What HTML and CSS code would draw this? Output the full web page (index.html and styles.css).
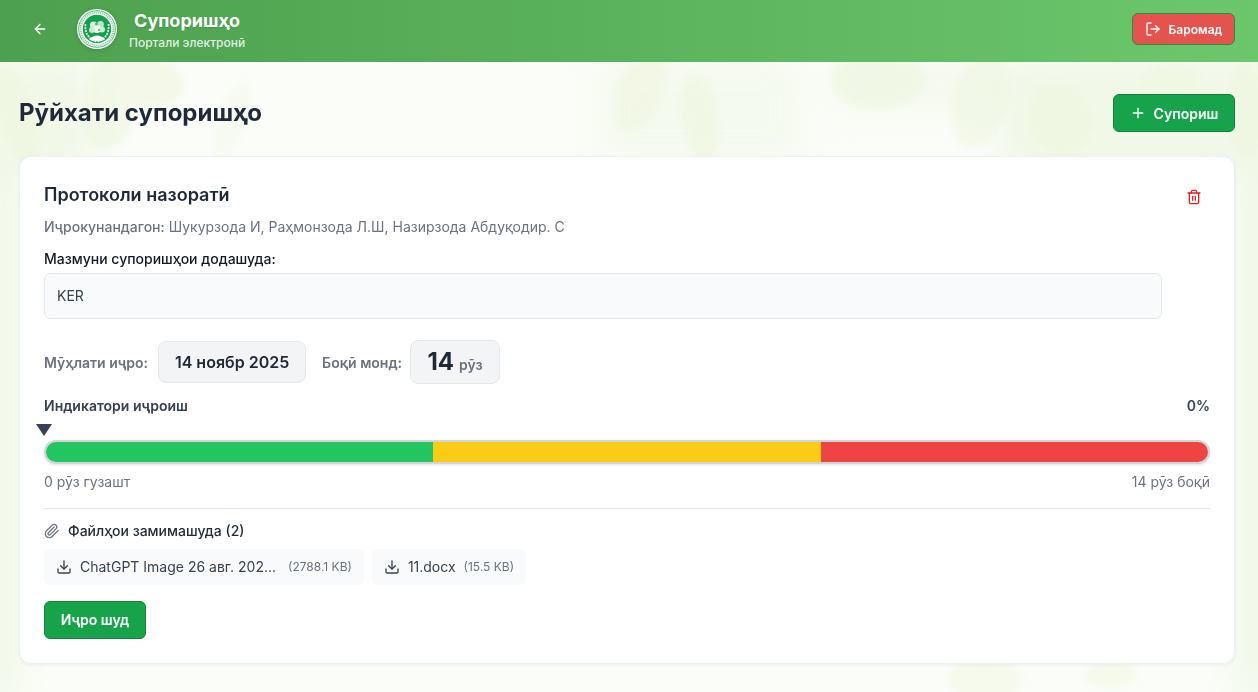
FILE: index.html
```html
<!DOCTYPE html>
<html lang="tg">
<head>
<meta charset="utf-8">
<title>Рӯйхати супоришҳо</title>
<link rel="stylesheet" href="styles.css">
</head>
<body>
<svg class="backdrop" width="1258" height="692" viewBox="0 0 1258 692" aria-hidden="true">
  <defs><filter id="soft"><feGaussianBlur stdDeviation="3"/></filter><filter id="softer"><feGaussianBlur stdDeviation="16"/></filter></defs>
  <g filter="url(#softer)" fill="#eef6e2" opacity=".75">
    <rect x="-40" y="60" width="130" height="110"/>
    <rect x="1000" y="60" width="300" height="110"/>
    <rect x="1236" y="160" width="40" height="540"/>
    <rect x="-20" y="160" width="38" height="540"/>
    <rect x="600" y="60" width="200" height="100" opacity=".5"/>
    <rect x="830" y="60" width="170" height="50" opacity=".5"/>
  </g>
  <g filter="url(#soft)" fill="#edf5dc" opacity=".55">
    <ellipse cx="148" cy="82" rx="36" ry="24" transform="rotate(10 148 82)"/>
    <ellipse cx="112" cy="100" rx="28" ry="50" transform="rotate(12 112 100)"/>
    <ellipse cx="18" cy="120" rx="16" ry="56" transform="rotate(-16 18 120)"/>
    <ellipse cx="232" cy="120" rx="14" ry="40" transform="rotate(20 232 120)" opacity=".5"/>
    <ellipse cx="640" cy="92" rx="22" ry="40" transform="rotate(22 640 92)" opacity=".85"/>
    <ellipse cx="700" cy="118" rx="18" ry="42" transform="rotate(-8 700 118)"/>
    <ellipse cx="878" cy="80" rx="46" ry="28"/>
    <ellipse cx="980" cy="100" rx="26" ry="50" transform="rotate(14 980 100)" opacity=".8"/>
    <ellipse cx="1060" cy="120" rx="30" ry="38" transform="rotate(-20 1060 120)"/>
    <ellipse cx="1170" cy="84" rx="30" ry="20" transform="rotate(-14 1170 84)" opacity=".8"/>
    <ellipse cx="1246" cy="110" rx="18" ry="50"/>
    <ellipse cx="985" cy="680" rx="36" ry="22" opacity=".7"/>
    <ellipse cx="1110" cy="675" rx="26" ry="12" opacity=".7"/>
  </g>
</svg>
<header class="topbar">
  <div class="topbar-left">
    <button class="back" aria-label="Back">
      <svg width="16" height="16" viewBox="0 0 24 24" fill="none" stroke="currentColor" stroke-width="2" stroke-linecap="round" stroke-linejoin="round"><path d="M19 12H5"/><path d="M12 19l-7-7 7-7"/></svg>
    </button>
    <svg class="logo" width="40" height="40" viewBox="0 0 40 40">
      <circle cx="20" cy="20" r="20" fill="#fff"/>
      <circle cx="20" cy="20" r="18.3" fill="none" stroke="#2aa35b" stroke-width=".8"/>
      <circle cx="20" cy="20" r="16.4" fill="none" stroke="#7cc08f" stroke-width="1.8" stroke-dasharray="1 1"/>
      <circle cx="20" cy="20" r="14.2" fill="#12a04c"/>
      <path d="M8.5 15c-1 9 3 15 10.5 17.5M31.5 15c1 9-3 15-10.5 17.5" fill="none" stroke="#d8f0df" stroke-width="1.8" stroke-dasharray="2 1"/>
      <circle cx="16.5" cy="16" r="3.6" fill="#d8eedb"/>
      <circle cx="23.5" cy="15.5" r="3.4" fill="#bfe3c8"/>
      <circle cx="20" cy="20" r="4" fill="#eef8ec"/>
      <circle cx="25" cy="20.5" r="3" fill="#cfe9d2"/>
      <circle cx="15" cy="21" r="3" fill="#cfe9d2"/>
      <circle cx="19.5" cy="15" r="1.6" fill="#5bb97e"/>
      <circle cx="22" cy="21" r="1.1" fill="#5bb97e"/>
      <path d="M12 30.5c3-3 5-4 8-4s5 1 8 4c-4 2.500-12 2.500-16 0z" fill="#fff"/>
    </svg>
    <div class="brand">
      <div class="brand-title">Супоришҳо</div>
      <div class="brand-sub">Портали электронӣ</div>
    </div>
  </div>
  <button class="logout">
    <svg width="16" height="16" viewBox="0 0 24 24" fill="none" stroke="currentColor" stroke-width="2" stroke-linecap="round" stroke-linejoin="round"><path d="M9 21H5a2 2 0 0 1-2-2V5a2 2 0 0 1 2-2h4"/><path d="M16 17l5-5-5-5"/><path d="M21 12H9"/></svg>
    <span>Баромад</span>
  </button>
</header>

<main class="page">
  <div class="page-head">
    <h1>Рӯйхати супоришҳо</h1>
    <button class="btn add">
      <svg width="16" height="16" viewBox="0 0 24 24" fill="none" stroke="currentColor" stroke-width="2" stroke-linecap="round"><path d="M5 12h14"/><path d="M12 5v14"/></svg>
      <span>Супориш</span>
    </button>
  </div>

  <section class="card">
    <div class="card-top">
      <div class="card-main">
        <h2>Протоколи назоратӣ</h2>
        <p class="assignees"><span class="assignees-label">Иҷрокунандагон:</span> Шукурзода И, Раҳмонзода Л.Ш, Назирзода Абдуқодир. С</p>
        <div class="label">Мазмуни супоришҳои додашуда:</div>
        <div class="content-box">KER</div>
      </div>
      <button class="trash" aria-label="Delete">
        <svg width="16" height="16" viewBox="0 0 24 24" fill="none" stroke="currentColor" stroke-width="2" stroke-linecap="round" stroke-linejoin="round"><path d="M3 6h18"/><path d="M19 6v14a2 2 0 0 1-2 2H7a2 2 0 0 1-2-2V6"/><path d="M8 6V4a2 2 0 0 1 2-2h4a2 2 0 0 1 2 2v2"/><path d="M10 11v6"/><path d="M14 11v6"/></svg>
      </button>
    </div>

    <div class="deadline">
      <span class="dl-label">Мӯҳлати иҷро:</span>
      <span class="chip chip-date">14 ноябр 2025</span>
      <span class="dl-label dl-second">Боқӣ монд:</span>
      <span class="chip chip-days"><b>14</b> <small>рӯз</small></span>
    </div>

    <div class="progress">
      <div class="progress-head"><span>Индикатори иҷроиш</span><span class="pct">0%</span></div>
      <div class="marker-row"><i class="marker"></i></div>
      <div class="bar"><i class="seg green"></i><i class="seg yellow"></i><i class="seg red"></i></div>
      <div class="progress-foot"><span>0 рӯз гузашт</span><span>14 рӯз боқӣ</span></div>
    </div>

    <div class="files">
      <div class="files-title">
        <svg width="16" height="16" viewBox="0 0 24 24" fill="none" stroke="#6b7280" stroke-width="2" stroke-linecap="round" stroke-linejoin="round"><path d="M21.44 11.05l-9.19 9.19a6 6 0 0 1-8.49-8.49l8.57-8.57A4 4 0 1 1 18 8.84l-8.59 8.57a2 2 0 0 1-2.83-2.83l8.49-8.48"/></svg>
        <span>Файлҳои замимашуда (2)</span>
      </div>
      <div class="file-list">
        <a class="file">
          <svg width="16" height="16" viewBox="0 0 24 24" fill="none" stroke="currentColor" stroke-width="2" stroke-linecap="round" stroke-linejoin="round"><path d="M21 15v4a2 2 0 0 1-2 2H5a2 2 0 0 1-2-2v-4"/><path d="M7 10l5 5 5-5"/><path d="M12 15V3"/></svg>
          <span class="file-name file-long">ChatGPT Image 26 авг. 202...</span>
          <span class="file-size">(2788.1 KB)</span>
        </a>
        <a class="file">
          <svg width="16" height="16" viewBox="0 0 24 24" fill="none" stroke="currentColor" stroke-width="2" stroke-linecap="round" stroke-linejoin="round"><path d="M21 15v4a2 2 0 0 1-2 2H5a2 2 0 0 1-2-2v-4"/><path d="M7 10l5 5 5-5"/><path d="M12 15V3"/></svg>
          <span class="file-name">11.docx</span>
          <span class="file-size">(15.5 KB)</span>
        </a>
      </div>
    </div>

    <button class="btn done">Иҷро шуд</button>
  </section>
</main>
</body>
</html>
```

FILE: styles.css
```css
* { box-sizing: border-box; }
html, body { height: 100%; }
body {
  margin: 0;
  min-height: 692px;
  overflow: hidden;
  font-family: Inter, "Noto Sans", sans-serif;
  color: #111827;
  background: #fafdf8;
}
button { font-family: inherit; cursor: pointer; }

.backdrop { position: fixed; left: 0; top: 0; z-index: -1; }

.topbar {
  height: 62px;
  display: flex;
  align-items: center;
  justify-content: space-between;
  padding: 0 23px 4px 32px;
  background: linear-gradient(90deg, #4da04f 0%, #57ad58 35%, #6cc76c 100%);
}
.topbar-left { display: flex; align-items: center; }
.back {
  width: 16px; height: 16px; padding: 0;
  margin-right: 29px;
  display: flex;
  background: none; border: 0; color: #fff;
}
.logo { display: block; margin-right: 12px; filter: drop-shadow(0 1px 2px rgba(0,0,0,.15)); }
.brand { text-align: center; margin-top: 2px; }
.brand-title { font-size: 18px; line-height: 24px; font-weight: 700; color: #fff; text-shadow: 0 1px 2px rgba(0,0,0,.1); margin-bottom: 2px; }
.brand-sub { font-size: 12px; line-height: 16px; font-weight: 500; color: rgba(255,255,255,.85); }
.logout {
  height: 32px; width: 103px;
  display: flex; align-items: center; justify-content: center; gap: 8px;
  padding: 0;
  background: #e5534e;
  border: 1px solid #2f8a47;
  border-radius: 6px;
  color: #fff;
  font-size: 12px; font-weight: 600;
}

.page { padding: 32px 23px 0 19px; }
.page-head { display: flex; align-items: center; justify-content: space-between; margin-bottom: 24px; }
h1 { margin: 0; font-size: 24px; line-height: 32px; font-weight: 700; color: #1f2937; }
.btn {
  display: flex; align-items: center; justify-content: center;
  background: #16a34a;
  border: 1px solid #15803d;
  border-radius: 6px;
  color: #fff;
  font-size: 14px; font-weight: 600;
  padding: 0;
}
.add { width: 122px; height: 38px; gap: 8px; }

.card {
  height: 508px;
  background: #fff;
  border: 1px solid #eceeef;
  border-radius: 12px;
  box-shadow: 0 1px 4px rgba(0,0,0,.06);
  padding: 24px;
}
.card-top { display: flex; align-items: flex-start; gap: 20px; }
.card-main { flex: 1; }
h2 { margin: 0; font-size: 18px; line-height: 28px; font-weight: 600; color: #1f2937; }
.assignees { margin: 8px 0 0; font-size: 14px; line-height: 20px; color: #6b7280; }
.assignees-label { font-weight: 500; }
.label { margin-top: 12px; font-size: 14px; line-height: 20px; font-weight: 500; color: #111827; }
.content-box {
  margin-top: 4px;
  height: 46px;
  display: flex; align-items: center;
  padding: 0 12px 1px;
  background: #f9fafb;
  border: 1px solid #e5e7eb;
  border-radius: 6px;
  font-size: 14px; color: #374151;
}
.trash {
  width: 24px; height: 24px; margin: 4px 4px 0 0;
  padding: 0; display: flex; align-items: center; justify-content: center;
  background: none; border: 0; color: #dc2626;
}

.deadline { display: flex; align-items: center; margin-top: 21px; }
.dl-label { font-size: 14px; font-weight: 600; color: #6b7280; margin-right: 10px; }
.dl-second { margin-left: 16px; margin-right: 8px; }
.chip {
  display: inline-flex; align-items: baseline; justify-content: center;
  background: #f3f4f6;
  border: 1px solid #e5e7eb;
  border-radius: 8px;
}
.chip-date { width: 148px; height: 42px; align-items: center; font-size: 16px; font-weight: 600; color: #1f2937; }
.chip-days { width: 90px; height: 44px; padding-top: 5px; gap: 5px; }
.chip-days b { font-size: 24px; line-height: 32px; font-weight: 700; color: #1f2937; }
.chip-days small { font-size: 14px; font-weight: 600; color: #6b7280; }

.progress { margin-top: 12px; }
.progress-head { display: flex; justify-content: space-between; font-size: 14px; line-height: 20px; font-weight: 600; color: #374151; }
.marker-row { height: 17px; margin-top: 7px; position: relative; }
.marker {
  position: absolute; left: -8px; top: 1px;
  width: 0; height: 0;
  border-left: 8px solid transparent;
  border-right: 8px solid transparent;
  border-top: 12px solid #374151;
}
.bar {
  display: flex;
  height: 24px;
  border: 2px solid #d1d5db;
  border-radius: 12px;
  overflow: hidden;
  box-shadow: 0 1px 3px rgba(0,0,0,.12);
  background: #e5e7eb;
}
.seg { flex: 1; display: block; }
.green { background: #22c55e; }
.yellow { background: #facc15; }
.red { background: #ef4444; }
.progress-foot { display: flex; justify-content: space-between; margin-top: 8px; font-size: 14px; line-height: 20px; color: #6b7280; }

.files { margin-top: 16px; border-top: 1px solid #e5e7eb; padding-top: 12px; }
.files-title { display: flex; align-items: center; gap: 8px; font-size: 14px; line-height: 20px; font-weight: 500; color: #1f2937; }
.file-list { display: flex; gap: 8px; margin-top: 8px; }
.file {
  display: flex; align-items: center; gap: 8px;
  height: 36px; padding: 0 12px 1px;
  background: #f9fafb;
  border-radius: 6px;
  font-size: 14px; color: #374151;
}
.file-name { display: block; }
.file-long { width: 200px; white-space: nowrap; }
.file-size { font-size: 12px; color: #6b7280; }
.done { width: 102px; height: 38px; margin-top: 16px; padding-bottom: 1px; }
```
